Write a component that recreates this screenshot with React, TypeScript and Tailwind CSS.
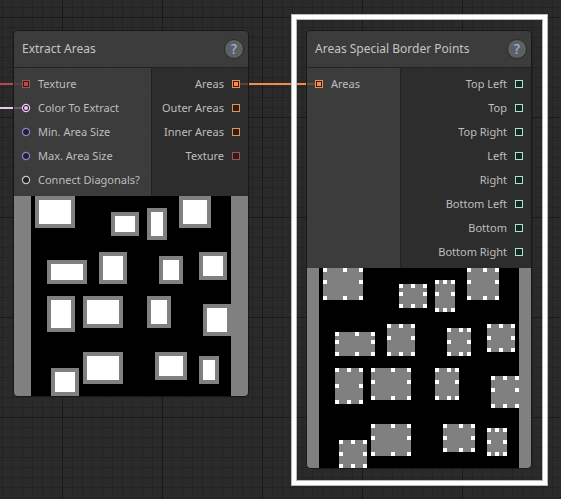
import React from "react";

type Shape = "square" | "circle";

interface Port {
  name: string;
  color: string;
  shape?: Shape;
  connected?: boolean;
}

type Area = [x: number, y: number, w: number, h: number];

const AREAS: Area[] = [
  [1, 0, 10, 8],
  [20, 4, 7, 6],
  [29, 3, 5, 8],
  [37, 0, 8, 8],
  [4, 16, 10, 6],
  [17, 14, 7, 8],
  [32, 15, 6, 7],
  [42, 14, 7, 7],
  [4, 25, 7, 9],
  [13, 25, 10, 8],
  [29, 25, 6, 8],
  [43, 27, 7, 8],
  [5, 43, 7, 7],
  [13, 39, 10, 8],
  [31, 39, 8, 7],
  [42, 40, 5, 7],
];

const ORANGE = "#f58b4c";
const RED = "#b14a4e";
const PINK = "#efc6f5";
const VIOLET = "#8c80e6";
const MINT = "#95efc2";

function PortIcon({ color, shape = "square", connected }: Port) {
  return (
    <svg width="8" height="8" viewBox="0 0 8 8" className="relative shrink-0 overflow-visible" aria-hidden="true">
      {shape === "square" ? (
        <>
          <rect x="0.5" y="0.5" width="7" height="7" fill="#222222" stroke={color} />
          {connected && <rect x="2" y="2" width="4" height="4" fill={color} />}
        </>
      ) : (
        <>
          <circle cx="4" cy="4" r="3.6" fill="#222222" stroke={color} strokeWidth="1.2" />
          {connected && <circle cx="4" cy="4" r="2" fill={color} />}
        </>
      )}
    </svg>
  );
}

function PortRow({ port, side }: { port: Port; side: "in" | "out" }) {
  return (
    <li className={`relative flex h-6 items-center gap-2 px-2 ${side === "out" ? "flex-row-reverse" : ""}`}>
      {port.connected && (
        <span
          className={`absolute top-[11px] h-0.5 w-2 opacity-25 ${side === "out" ? "right-0" : "left-0"}`}
          style={{ backgroundColor: port.color }}
        />
      )}
      <PortIcon {...port} />
      <span className="whitespace-nowrap">{port.name}</span>
    </li>
  );
}

interface NodeProps {
  title: string;
  inputs: Port[];
  outputs: Port[];
  place: string;
  inputWidth: string;
  children: React.ReactNode;
}

function GraphNode({ title, inputs, outputs, place, inputWidth, children }: NodeProps) {
  return (
    <section className={`absolute overflow-hidden rounded-[5px] border border-[#191919] ${place}`}>
      <header className="flex h-[37px] items-center justify-between border-b border-[#222222] bg-[#3e3e3e]/92 pr-1 pl-2">
        <h2 className="text-[12px] leading-4 whitespace-nowrap text-[#c4c4c4]">{title}</h2>
        <button
          type="button"
          aria-label={`Help: ${title}`}
          className="flex size-5 shrink-0 items-center justify-center rounded-full border border-[#2b2b2b] bg-[#606060] font-['DejaVu_Sans',sans-serif] text-[14px] leading-4 text-[#8dbcf5]"
        >
          ?
        </button>
      </header>
      <div className="flex text-[11px] leading-4 text-[#bebebe]">
        <ul className={`shrink-0 bg-[#3e3e3e]/92 py-1 ${inputWidth}`}>
          {inputs.map((port) => (
            <PortRow key={port.name} port={port} side="in" />
          ))}
        </ul>
        <ul className="min-w-0 flex-1 border-l border-[#222222] bg-[#2e2e2e]/92 py-1">
          {outputs.map((port) => (
            <PortRow key={port.name} port={port} side="out" />
          ))}
        </ul>
      </div>
      <div className="flex justify-center bg-[#808080]">{children}</div>
    </section>
  );
}

function ExtractedPreview() {
  return (
    <svg width="200" height="200" viewBox="0 0 50 50" shapeRendering="crispEdges" className="block">
      <rect width="50" height="50" fill="#000000" />
      {AREAS.map(([x, y, w, h]) => (
        <g key={`${x}-${y}`}>
          <rect x={x} y={y} width={w} height={h} fill="#808080" />
          <rect x={x + 1} y={y + 1} width={w - 2} height={h - 2} fill="#ffffff" />
        </g>
      ))}
    </svg>
  );
}

function BorderPointsPreview() {
  return (
    <svg width="200" height="200" viewBox="0 0 50 50" shapeRendering="crispEdges" className="block">
      <rect width="50" height="50" fill="#000000" />
      {AREAS.map(([x, y, w, h]) => {
        const columns = [x, x + Math.floor(w / 2), x + w - 1];
        const rows = [y, y + Math.floor((h - 1) / 2), y + h - 1];
        return (
          <g key={`${x}-${y}`}>
            <rect x={x} y={y} width={w} height={h} fill="#808080" />
            {rows.map((py, r) =>
              columns.map((px, c) =>
                r === 1 && c === 1 ? null : (
                  <rect key={`${r}${c}`} x={px} y={py} width="1" height="1" fill="#ffffff" />
                ),
              ),
            )}
          </g>
        );
      })}
    </svg>
  );
}

const mint = (name: string): Port => ({ name, color: MINT });

export default function App() {
  return (
    <main className="relative h-screen w-full overflow-hidden bg-[#2a2a2a] font-['Lucida_Grande','Noto_Sans',sans-serif]">
      <svg className="absolute size-full" aria-hidden="true">
        <defs>
          <pattern id="minor" x="2" y="7" width="10" height="10" patternUnits="userSpaceOnUse">
            <path d="M0 0.5H10M0.5 0V10" stroke="#232323" />
          </pattern>
          <pattern id="major" x="62" y="17" width="100" height="100" patternUnits="userSpaceOnUse">
            <path d="M0 0.5H100M0.5 0V100" stroke="#191919" />
          </pattern>
        </defs>
        <rect width="100%" height="100%" fill="url(#minor)" />
        <rect width="100%" height="100%" fill="url(#major)" />
        <path d="M0 84H13" stroke={RED} strokeWidth="2" />
        <path d="M0 108H13" stroke={PINK} strokeWidth="2" />
        <path d="M249 84H306" stroke={ORANGE} strokeWidth="2" />
      </svg>

      <GraphNode
        title="Extract Areas"
        place="top-[30px] left-[13px] w-[236px]"
        inputWidth="w-[137px]"
        inputs={[
          { name: "Texture", color: RED, connected: true },
          { name: "Color To Extract", color: PINK, shape: "circle", connected: true },
          { name: "Min. Area Size", color: VIOLET, shape: "circle" },
          { name: "Max. Area Size", color: VIOLET, shape: "circle" },
          { name: "Connect Diagonals?", color: "#c8c8c8", shape: "circle" },
        ]}
        outputs={[
          { name: "Areas", color: ORANGE, connected: true },
          { name: "Outer Areas", color: ORANGE },
          { name: "Inner Areas", color: ORANGE },
          { name: "Texture", color: RED },
        ]}
      >
        <ExtractedPreview />
      </GraphNode>

      <GraphNode
        title="Areas Special Border Points"
        place="top-[30px] left-[306px] w-[226px]"
        inputWidth="w-[93px]"
        inputs={[{ name: "Areas", color: ORANGE, connected: true }]}
        outputs={[
          mint("Top Left"),
          mint("Top"),
          mint("Top Right"),
          mint("Left"),
          mint("Right"),
          mint("Bottom Left"),
          mint("Bottom"),
          mint("Bottom Right"),
        ]}
      >
        <BorderPointsPreview />
      </GraphNode>

      <div className="pointer-events-none absolute top-[14px] left-[291px] h-[472px] w-[257px] border border-[#b8b8b8]">
        <div className="size-full border-4 border-white">
          <div className="size-full border border-[#b8b8b8]" />
        </div>
      </div>
    </main>
  );
}
